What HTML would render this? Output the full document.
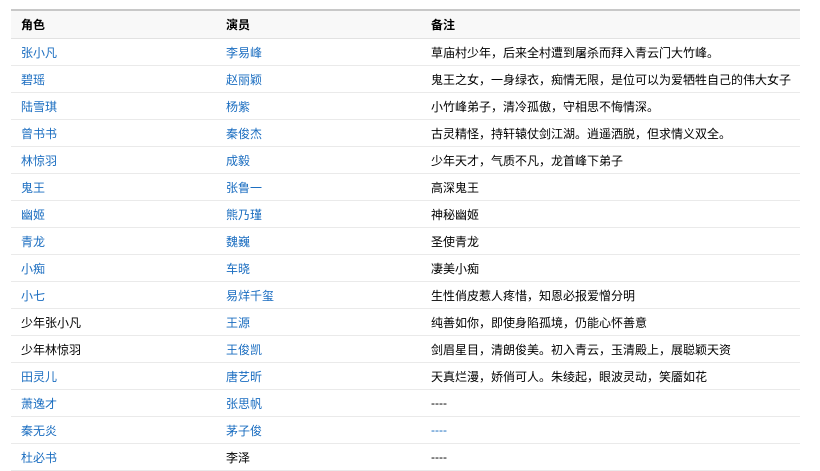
<!DOCTYPE html>
<html><head><meta charset="utf-8"><style>
body{margin:0;background:#fff;font-family:"Liberation Sans","Noto Sans CJK SC",sans-serif;font-size:12px;color:#000}
table{position:absolute;left:11px;top:9px;width:789px;border-collapse:collapse;border-top:2px solid #c8c8c8}
td,th{height:26px;padding:0 0 0 10px;text-align:left;border-bottom:1px solid #eaeaea;white-space:nowrap}
th{background:#f8f8f8;font-weight:bold;border-bottom:1px solid #e2e2e2;height:27px}
a{color:#1a6dc0;text-decoration:none}
.c1{width:195px}.c2{width:195px}
</style></head><body>
<table>
<tr><th class="c1">角色</th><th class="c2">演员</th><th>备注</th></tr>
<tr><td><a>张小凡</a></td><td><a>李易峰</a></td><td>草庙村少年，后来全村遭到屠杀而拜入青云门大竹峰。</td></tr>
<tr><td><a>碧瑶</a></td><td><a>赵丽颖</a></td><td>鬼王之女，一身绿衣，痴情无限，是位可以为爱牺牲自己的伟大女子</td></tr>
<tr><td><a>陆雪琪</a></td><td><a>杨紫</a></td><td>小竹峰弟子，清冷孤傲，守相思不悔情深。</td></tr>
<tr><td><a>曾书书</a></td><td><a>秦俊杰</a></td><td>古灵精怪，持轩辕仗剑江湖。逍遥洒脱，但求情义双全。</td></tr>
<tr><td><a>林惊羽</a></td><td><a>成毅</a></td><td>少年天才，气质不凡，龙首峰下弟子</td></tr>
<tr><td><a>鬼王</a></td><td><a>张鲁一</a></td><td>高深鬼王</td></tr>
<tr><td><a>幽姬</a></td><td><a>熊乃瑾</a></td><td>神秘幽姬</td></tr>
<tr><td><a>青龙</a></td><td><a>魏巍</a></td><td>圣使青龙</td></tr>
<tr><td><a>小痴</a></td><td><a>车晓</a></td><td>凄美小痴</td></tr>
<tr><td><a>小七</a></td><td><a>易烊千玺</a></td><td>生性俏皮惹人疼惜，知恩必报爱憎分明</td></tr>
<tr><td>少年张小凡</td><td><a>王源</a></td><td>纯善如你，即使身陷孤境，仍能心怀善意</td></tr>
<tr><td>少年林惊羽</td><td><a>王俊凯</a></td><td>剑眉星目，清朗俊美。初入青云，玉清殿上，展聪颖天资</td></tr>
<tr><td><a>田灵儿</a></td><td><a>唐艺昕</a></td><td>天真烂漫，娇俏可人。朱绫起，眼波灵动，笑靥如花</td></tr>
<tr><td><a>萧逸才</a></td><td><a>张思帆</a></td><td>----</td></tr>
<tr><td><a>秦无炎</a></td><td><a>茅子俊</a></td><td><a>----</a></td></tr>
<tr><td><a>杜必书</a></td><td>李泽</td><td>----</td></tr>
</table>
</body></html>
